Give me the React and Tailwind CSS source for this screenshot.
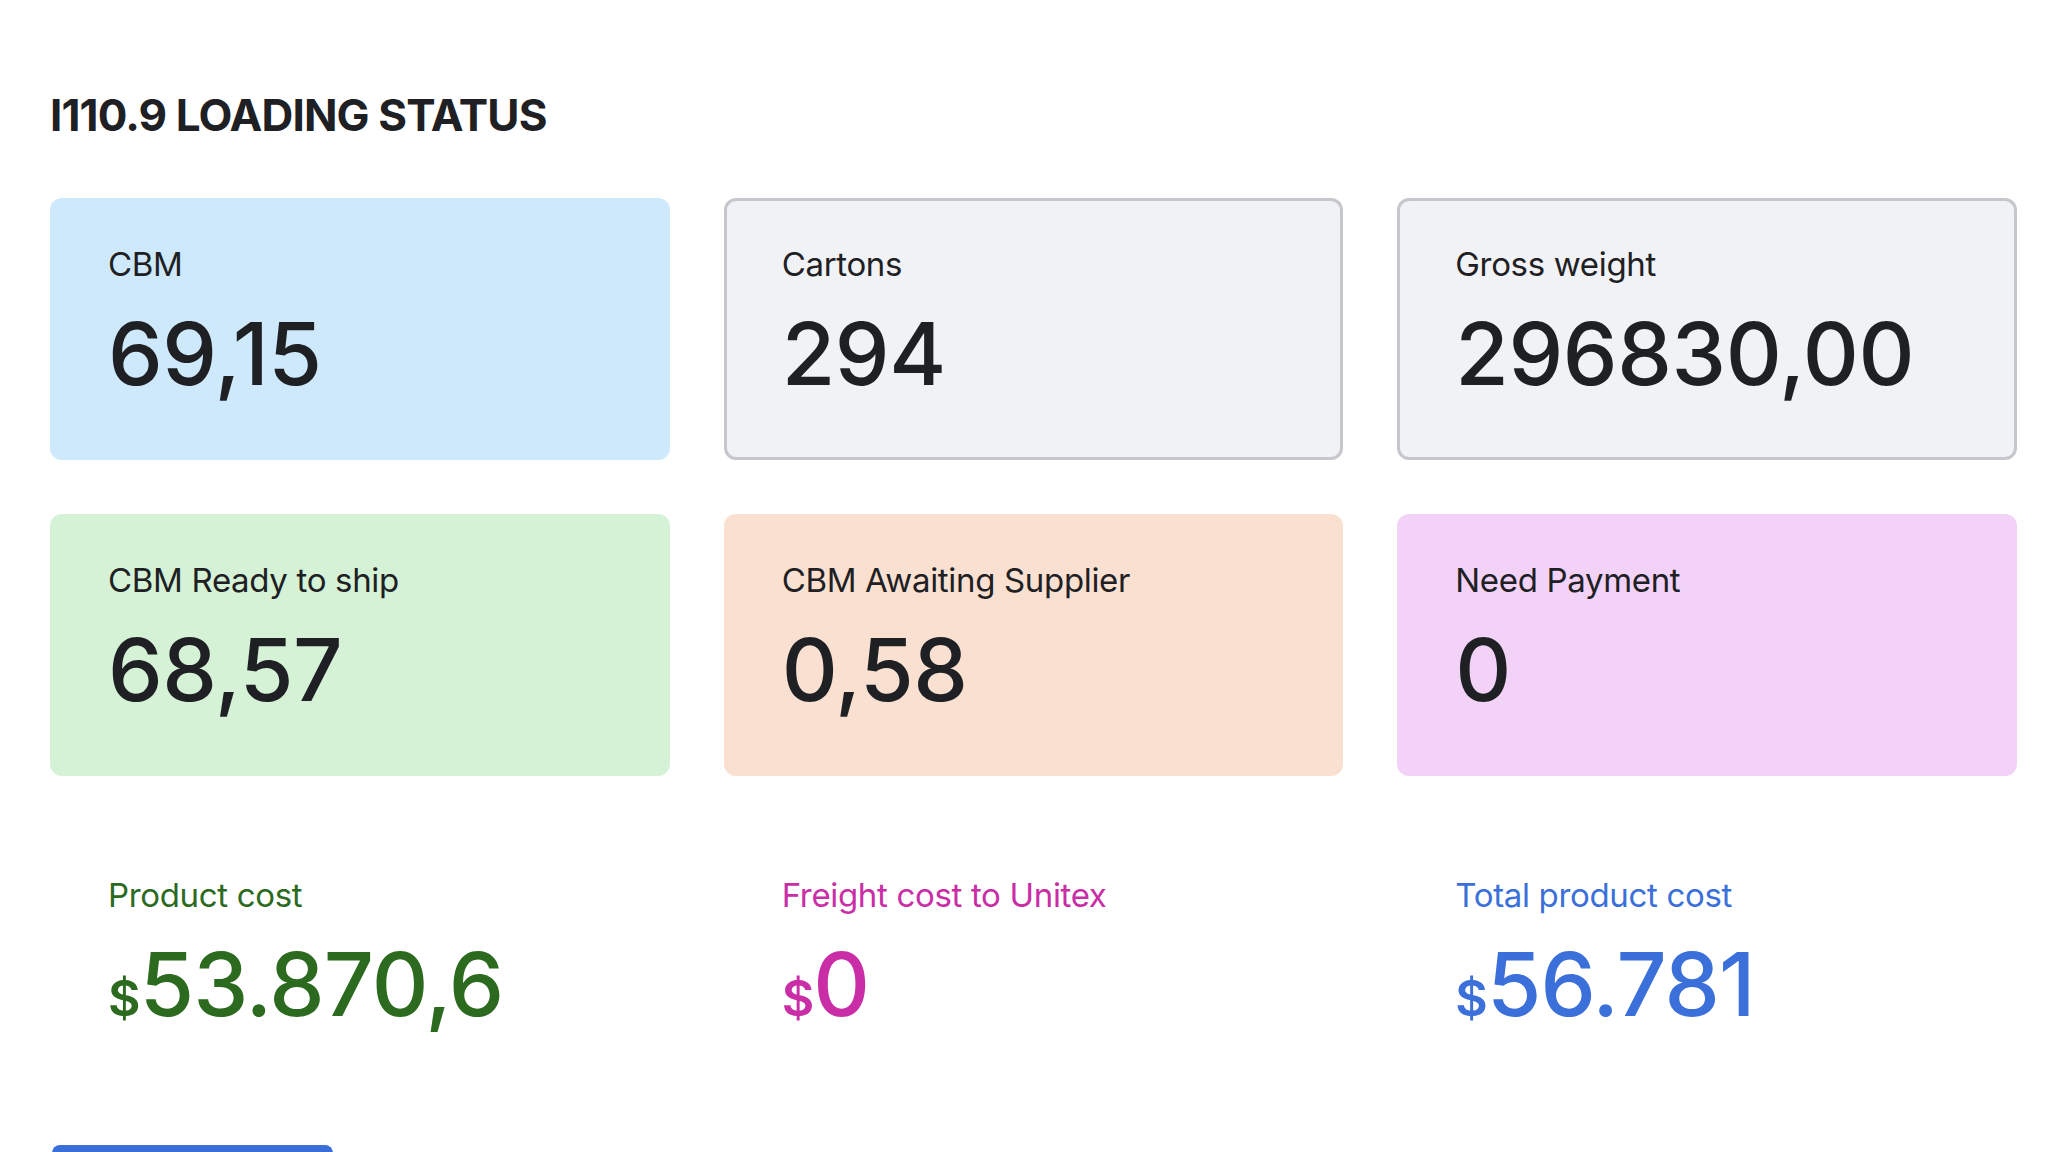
import React from "react";

const cards = [
  { label: "CBM", value: "69,15", box: "bg-[#cee9fb] border-transparent" },
  { label: "Cartons", value: "294", box: "bg-[#f1f2f6] border-[#c6c7cc]" },
  { label: "Gross weight", value: "296830,00", box: "bg-[#f1f2f6] border-[#c6c7cc]" },
  { label: "CBM Ready to ship", value: "68,57", box: "bg-[#d5f2d6] border-transparent" },
  { label: "CBM Awaiting Supplier", value: "0,58", box: "bg-[#f9e0d0] border-transparent" },
  { label: "Need Payment", value: "0", box: "bg-[#f2d3f7] border-transparent" },
];

const costs = [
  { label: "Product cost", value: "53.870,6", color: "text-[#2c6a1f]" },
  { label: "Freight cost to Unitex", value: "0", color: "text-[#c92ea6]" },
  { label: "Total product cost", value: "56.781", color: "text-[#3b6fd9]" },
];

export default function App() {
  return (
    <div
      className="h-[1152px] overflow-hidden bg-white pl-[50px] pr-[45px] pt-[89px] text-[#1e2024]"
      style={{ fontFamily: "Inter, 'Noto Sans', sans-serif" }}
    >
      <h1 className="mb-[56px] text-[44px] font-bold leading-[1.2] tracking-[-0.02em]">
        I110.9 LOADING STATUS
      </h1>

      <div className="grid grid-cols-3 gap-[54px]">
        {cards.map((c) => (
          <div key={c.label} className={`h-[262px] rounded-xl border-[3px] px-[55px] pt-[44px] ${c.box}`}>
            <div className="text-[33px] leading-[1.2] tracking-[-0.01em]">{c.label}</div>
            <div className="mt-[26px] text-[87px] font-medium leading-none tracking-[-0.005em]">{c.value}</div>
          </div>
        ))}
      </div>

      <div className="mt-[100px] grid grid-cols-3 gap-[54px]">
        {costs.map((c) => (
          <div key={c.label} className={`px-[58px] ${c.color}`}>
            <div className="text-[33px] leading-[1.2] tracking-[-0.01em]">{c.label}</div>
            <div className="mt-[25px] text-[88px] font-medium leading-none tracking-[-0.01em]">
              <span className="text-[50px] font-semibold">$</span>
              {c.value}
            </div>
          </div>
        ))}
      </div>

      <button className="ml-[2px] mt-[117px] h-[60px] w-[281px] rounded-lg bg-[#3a6fd8] text-white" />
    </div>
  );
}
